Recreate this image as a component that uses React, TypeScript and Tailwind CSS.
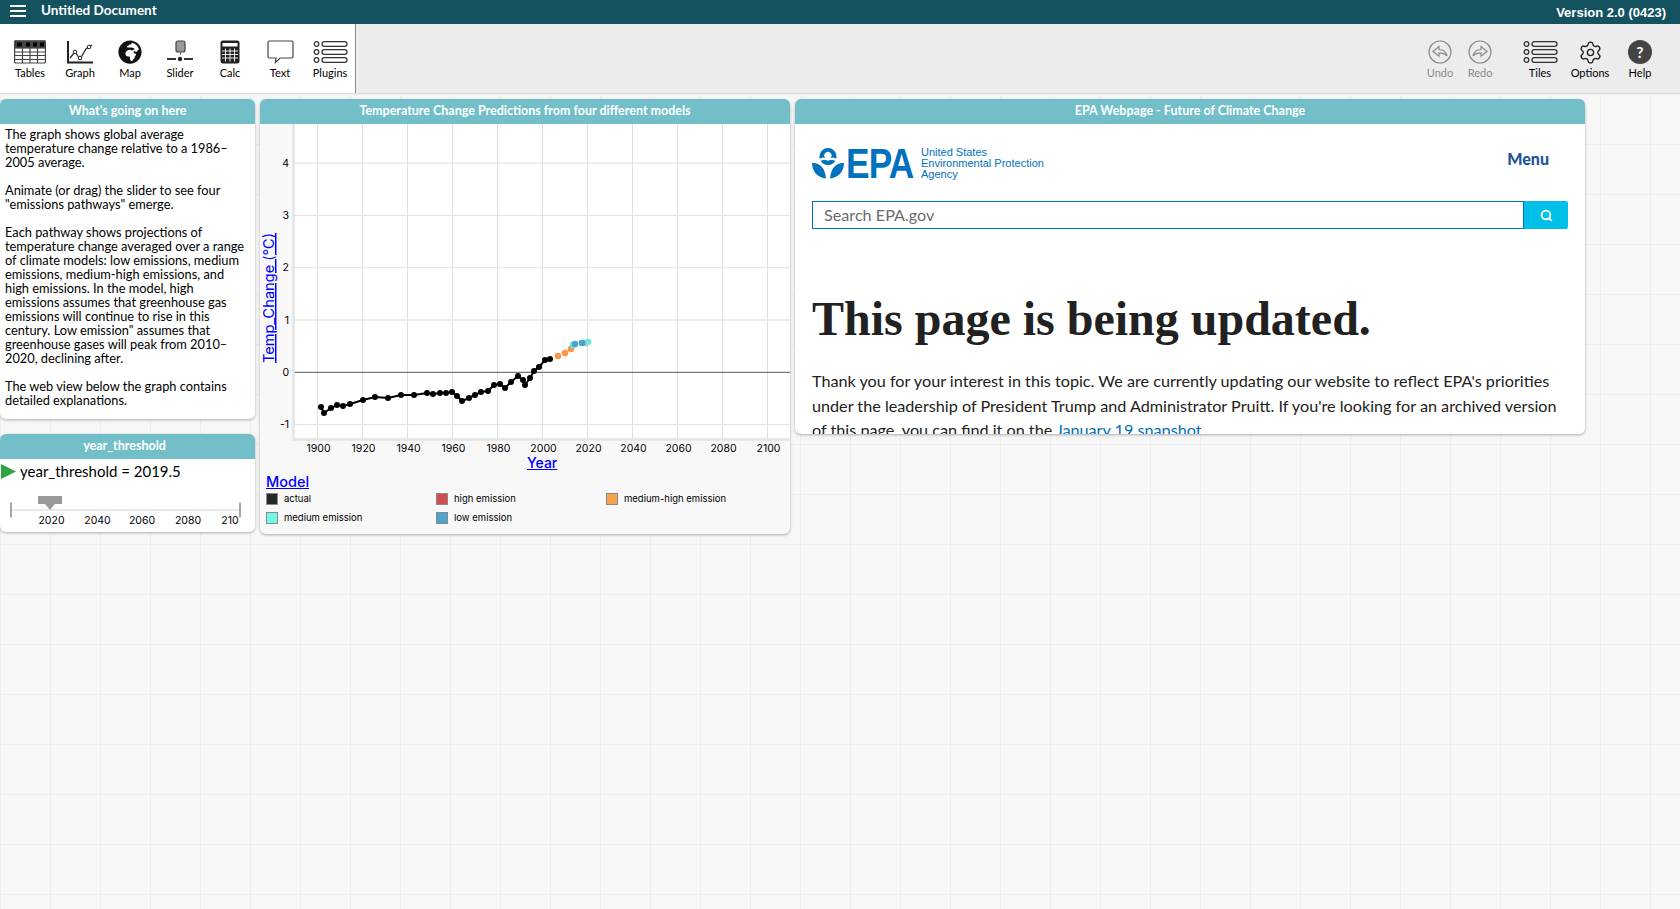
import { Search, Settings } from 'lucide-react';
import { FaGlobeAfrica } from 'react-icons/fa';
import type { ReactNode } from 'react';

const museo = "font-['Lato','Noto_Sans',sans-serif]";
const axisFont = 'Inter, Lato, sans-serif';

// chart data, read off the plot in page pixels
const actual: [number, number][] = [
  [321, 407], [324, 413], [331, 408], [337, 405], [343, 406], [350, 404], [363, 400], [375, 397],
  [388, 398], [401, 395], [414, 395], [427, 393], [433, 394], [440, 393], [446, 393], [452, 392],
  [457, 396], [462, 401], [469, 398], [475, 395], [481, 392], [488, 391], [494, 385], [500, 384],
  [505, 388], [511, 382], [518, 376], [523, 380], [525, 385], [530, 378], [534, 371], [539, 367],
  [545, 360], [550, 359],
];
const projected: [number, number, string][] = [
  [558, 356, '#f7964a'], [565, 353, '#f7964a'], [571, 349, '#f7964a'],
  [573, 345, '#6ee7dc'], [585, 343, '#d9a0a0'], [588, 342, '#6ee7dc'],
  [575, 344, '#4ba3cf'], [582, 343, '#4ba3cf'],
];

const xYears = [1900, 1920, 1940, 1960, 1980, 2000, 2020, 2040, 2060, 2080, 2100];
const yTicks = [4, 3, 2, 1, 0, -1];
const xOf = (year: number) => 57.5 + (year - 1900) * 2.25;
const yOf = (v: number) => 248.3 - v * 52.3;

const summary = [
  ['The graph shows global average', 'temperature change relative to a 1986–', '2005 average.'],
  ['Animate (or drag) the slider to see four', '"emissions pathways" emerge.'],
  [
    'Each pathway shows projections of',
    'temperature change averaged over a range',
    'of climate models: low emissions, medium',
    'emissions, medium-high emissions, and',
    'high emissions. In the model, high',
    'emissions assumes that greenhouse gas',
    'emissions will continue to rise in this',
    'century. Low emission" assumes that',
    'greenhouse gases will peak from 2010–',
    '2020, declining after.',
  ],
  ['The web view below the graph contains', 'detailed explanations.'],
];

const legend = [
  { label: 'actual', color: 'bg-[#23262b]' },
  { label: 'high emission', color: 'bg-[#cf4f52]' },
  { label: 'medium-high emission', color: 'bg-[#f9a34d]' },
  { label: 'medium emission', color: 'bg-[#6ffbe9]' },
  { label: 'low emission', color: 'bg-[#4fa3cf]' },
];

function ToolButton({ label, icon, muted, width = 'w-[50px]' }: { label: string; icon: ReactNode; muted?: boolean; width?: string }) {
  return (
    <div className={`flex ${width} flex-col items-center pt-[16px]`}>
      <div className="flex h-[24px] items-center justify-center">{icon}</div>
      <span className={`mt-[2px] whitespace-nowrap text-[11px] leading-[14px] ${muted ? 'text-[#8a8a8a]' : 'text-black'}`}>{label}</span>
    </div>
  );
}

function TablesIcon() {
  return (
    <svg width="32" height="24" viewBox="0 0 32 24" fill="none" stroke="#444" strokeWidth="1.2">
      <rect x="0.6" y="1" width="30.8" height="22" rx="1" />
      <rect x="1" y="1" width="30" height="7" fill="#444" />
      <path d="M3 2.5h5v4H3zM12 2.5h4v4h-4zM19 2.500h4v4h-4zM26 2.500h4v4h-4z" fill="#000" stroke="none" />
      <path d="M1 12h30M1 15.500h30M1 19.500h30M8.500 8v15M16 8v15M23.500 8v15" />
    </svg>
  );
}

function GraphIcon() {
  return (
    <svg width="26" height="24" viewBox="0 0 26 24" fill="none" stroke="#222">
      <path d="M1 1v21.500h25" strokeWidth="2" />
      <path d="M3 18l5-6 5 7 6-10 6-4" strokeWidth="1.2" />
      <circle cx="8" cy="12" r="1.800" fill="#fff" />
      <circle cx="13" cy="18" r="1.800" fill="#fff" />
      <circle cx="22" cy="7" r="1.800" fill="#fff" />
    </svg>
  );
}

function SliderIcon() {
  return (
    <svg width="26" height="24" viewBox="0 0 26 24">
      <rect x="9" y="1" width="9" height="11" rx="2" fill="#999" stroke="#444" strokeWidth="1.200" />
      <path d="M13.500 12v3" stroke="#777" strokeWidth="1.200" />
      <path d="M0 19h9M17 19h9" stroke="#333" strokeWidth="2.200" />
      <circle cx="13" cy="19" r="2.200" fill="#222" />
    </svg>
  );
}

function CalcIcon() {
  return (
    <svg width="20" height="24" viewBox="0 0 20 24">
      <rect x="0.500" y="0.500" width="19" height="23" rx="2.500" fill="#222" />
      <rect x="2.500" y="3" width="15" height="3.500" fill="#fff" />
      <path d="M2 11h16M2 14.500h16M2 18h16M5.500 8.500v13M10 8.500v13M14.500 8.500v13" stroke="#fff" strokeWidth="0.900" />
    </svg>
  );
}

function TextIcon() {
  return (
    <svg width="27" height="24" viewBox="0 0 27 24" fill="none" stroke="#444" strokeWidth="1.200">
      <path d="M2.500 1h22a1.500 1.500 0 0 1 1.500 1.500v14a1.500 1.500 0 0 1-1.500 1.500H13l-4.500 4.500.5-4.500H2.500A1.500 1.500 0 0 1 1 16.500v-14A1.500 1.500 0 0 1 2.500 1z" />
    </svg>
  );
}

function RowsIcon() {
  return (
    <svg width="35" height="24" viewBox="0 0 35 24" fill="none" stroke="#333" strokeWidth="1.300">
      <circle cx="3.500" cy="4" r="2.300" />
      <circle cx="3.500" cy="12" r="2.300" />
      <circle cx="3.500" cy="20" r="2.300" />
      <rect x="9" y="1.700" width="25" height="4.600" rx="2.300" />
      <rect x="9" y="9.700" width="25" height="4.600" rx="2.300" />
      <rect x="9" y="17.700" width="25" height="4.600" rx="2.300" />
    </svg>
  );
}

function HistoryIcon({ flip }: { flip?: boolean }) {
  return (
    <svg width="24" height="24" viewBox="0 0 24 24" fill="none" stroke="#8a8a8a" strokeWidth="1.200" className={flip ? '-scale-x-100' : ''}>
      <circle cx="12" cy="12" r="11" />
      <path d="M5 11.500l6-5v3c4 0 7 2 8 6.500-2-2.500-4.500-3.200-8-3.200v3.500z" />
    </svg>
  );
}

function EpaSeal() {
  return (
    <svg width="32" height="31" viewBox="0 0 32 31" fill="#0071bc">
      <path d="M7.500 8.500a8.500 8.500 0 0 1 17 0c0 .7-.1 1.300-.2 1.900-1.300.2-2.200-.9-3.600-.9-.9 0-1.600.4-2.300.7a3.600 3.600 0 1 0-5 0c-.7-.3-1.400-.7-2.300-.7-1.400 0-2.300 1.100-3.600.9-.1-.6-.2-1.200-.2-1.900z" />
      <path d="M8.500 12.500c1.300.5 2.500-.8 3.800-.8 1.400 0 2.300 1 3.700 1s2.300-1 3.700-1c1.300 0 2.500 1.300 3.800.8-1.200 2.600-4 4.500-7.500 4.500s-6.300-1.900-7.500-4.500z" />
      <path d="M0 15c6.500-.8 13 3.500 14 15.500C6 30 0 23.500 0 15z" />
      <path d="M32 15c-6.500-.8-13 3.500-14 15.500 8-.5 14-7 14-15.500z" />
    </svg>
  );
}

function Card({ title, className, headClass = '', children }: { title: string; className: string; headClass?: string; children: ReactNode }) {
  return (
    <section className={`flex flex-col overflow-hidden rounded-[6px] shadow-[0_1px_3px_rgba(0,0,0,0.3)] ${className}`}>
      <h2 className={`h-[25px] shrink-0 bg-[#72bfc9] text-center text-[12.5px] font-bold leading-[24px] text-white ${headClass}`}>{title}</h2>
      {children}
    </section>
  );
}

function TemperatureChart() {
  return (
    <svg width="530" height="340" viewBox="0 0 530 340" className="block shrink-0">
      <rect x="34" y="0" width="496" height="314" fill="#fff" />
      {xYears.map((year) => (
        <line key={year} x1={xOf(year)} x2={xOf(year)} y1="0" y2="314" stroke="#dfdfdf" />
      ))}
      {yTicks.map((v) => (
        <line key={v} x1="34" x2="530" y1={yOf(v)} y2={yOf(v)} stroke={v === 0 ? '#555' : '#e6e6e6'} strokeWidth={v === 0 ? 1 : 1.300} />
      ))}
      <path d="M33.500 0v315.500H530" fill="none" stroke="#e4e4e4" strokeWidth="2.500" />
      <polyline points={actual.map(([x, y]) => `${x - 260},${y - 124}`).join(' ')} fill="none" stroke="#000" strokeWidth="2" />
      {actual.map(([x, y]) => (
        <circle key={x} cx={x - 260} cy={y - 124} r="3" fill="#000" />
      ))}
      {projected.map(([x, y, c], i) => (
        <circle key={i} cx={x - 260} cy={y - 124} r="3.300" fill={c} />
      ))}
      <g fontFamily={axisFont} fontSize="10.500" fill="#000">
        {yTicks.map((v) => (
          <text key={v} x="29" y={yOf(v) + 3.500} textAnchor="end">{v}</text>
        ))}
        {xYears.map((year) => (
          <text key={year} x={xOf(year) + 1} y="328" textAnchor="middle">{year}</text>
        ))}
      </g>
      <text x="0" y="0" transform="translate(14,239) rotate(-90)" fontFamily={axisFont} fontSize="14.600" fill="#0000ff" textDecoration="underline">Temp_Change (°C)</text>
    </svg>
  );
}

export default function App() {
  return (
    <div className={`flex h-screen flex-col overflow-hidden bg-[#f7f7f7] ${museo}`}>
      <header className="flex h-[24px] shrink-0 items-center justify-between bg-[#14525f] text-white">
        <div className="flex items-center">
          <div className="ml-[10px] flex h-[12px] w-[16px] -translate-y-[1px] flex-col justify-between">
            <span className="h-[2px] bg-white" />
            <span className="h-[2px] bg-white" />
            <span className="h-[2px] bg-white" />
          </div>
          <span className="ml-[15px] -translate-y-[2px] text-[13.5px] font-bold leading-[20px]">Untitled Document</span>
        </div>
        <span className="mr-[14px] mt-[1px] font-['Liberation_Sans',sans-serif] text-[13px] font-bold">Version 2.0 (0423)</span>
      </header>

      <div className="flex h-[70px] shrink-0 border-b border-[#dcdcdc] bg-[#ececec]">
        <div className="flex w-[356px] border-r border-[#8c8c8c] bg-white pl-[5px]">
          <ToolButton label="Tables" icon={<TablesIcon />} />
          <ToolButton label="Graph" icon={<GraphIcon />} />
          <ToolButton label="Map" icon={<FaGlobeAfrica size={24} color="#111" />} />
          <ToolButton label="Slider" icon={<SliderIcon />} />
          <ToolButton label="Calc" icon={<CalcIcon />} />
          <ToolButton label="Text" icon={<TextIcon />} />
          <ToolButton label="Plugins" icon={<RowsIcon />} />
        </div>
        <div className="flex flex-1 justify-end pr-[15px]">
          <ToolButton label="Undo" icon={<HistoryIcon />} muted width="w-[40px]" />
          <ToolButton label="Redo" icon={<HistoryIcon flip />} muted width="w-[40px]" />
          <div className="w-[15px]" />
          <ToolButton label="Tiles" icon={<RowsIcon />} />
          <ToolButton label="Options" icon={<Settings size={25} strokeWidth={1.3} color="#222" />} />
          <ToolButton
            label="Help"
            icon={
              <span className="flex h-[24px] w-[24px] items-center justify-center rounded-full bg-[#444] text-[15px] font-bold text-white">?</span>
            }
          />
        </div>
      </div>

      <main className="flex flex-1 items-start gap-[5px] bg-[linear-gradient(to_right,#eeeeee_1px,transparent_1px),linear-gradient(to_bottom,#eeeeee_1px,transparent_1px)] bg-[size:50px_50px] pt-[5px]">
        <div className="flex w-[255px] flex-col gap-[15px]">
          <Card title="What's going on here" className="h-[320px] bg-white">
            <div className="flex flex-col gap-[14px] pl-[5px] pt-[3px] text-[12.8px] leading-[14px] text-black">
              {summary.map((para, i) => (
                <p key={i}>
                  {para.map((line) => (
                    <span key={line} className="block whitespace-nowrap">{line}</span>
                  ))}
                </p>
              ))}
            </div>
          </Card>
          <Card title="year_threshold" headClass="pr-[6px]" className="h-[98px] bg-white">
            <div className="flex items-center pl-[1px] pt-[3px]">
              <svg width="15" height="15" viewBox="0 0 15 15" className="shrink-0">
                <path d="M0 0l15 7.500L0 15z" fill="#2da343" />
              </svg>
              <span className="ml-[4px] text-[15px] leading-[18px] text-black">year_threshold = 2019.5</span>
            </div>
            <svg width="255" height="50" viewBox="0 0 255 50" className="mt-[2px] block">
              <path d="M11 28h229" stroke="#e2e2e2" strokeWidth="1.500" />
              <path d="M11 20.500v15M240 20.500v15" stroke="#888" strokeWidth="1.500" />
              <path d="M38 14h24v8h-7l-5 6-5-6h-7z" fill="#999" />
              <g fontFamily={axisFont} fontSize="10.500" fill="#000" textAnchor="middle">
                <text x="51.500" y="42">2020</text>
                <text x="97.500" y="42">2040</text>
                <text x="142" y="42">2060</text>
                <text x="188" y="42">2080</text>
                <text x="230" y="42">210</text>
              </g>
            </svg>
          </Card>
        </div>

        <Card title="Temperature Change Predictions from four different models" className="h-[435px] w-[530px] bg-[#f8f8f8]">
          <TemperatureChart />
          <div className="relative font-['Inter',sans-serif]">
            <a className="absolute left-[267px] top-[-9px] text-[14px] font-medium leading-[16px] text-[#0000ff] underline">Year</a>
            <a className="ml-[6px] mt-[10px] block text-[14.5px] font-medium leading-[16px] text-[#0000ff] underline">Model</a>
            <ul className="ml-[6px] mt-[3px] grid grid-cols-[170px_170px_170px] gap-y-[7px]">
              {legend.map((item) => (
                <li key={item.label} className="flex h-[12px] items-center gap-[6px]">
                  <span className={`h-[12px] w-[12px] border border-[#8a8a8a] ${item.color}`} />
                  <span className="text-[9.5px] leading-[12px] text-black">{item.label}</span>
                </li>
              ))}
            </ul>
          </div>
        </Card>

        <Card title="EPA Webpage - Future of Climate Change" className="h-[335px] w-[790px] bg-white">
          <div className="flex h-[310px] flex-col overflow-hidden px-[17px]">
            <div className="flex items-center justify-between pt-[23px]">
              <div className="flex h-[31px] items-center">
                <EpaSeal />
                <span className="ml-[2px] w-[67px] origin-left scale-x-[0.84] font-['Liberation_Sans',sans-serif] text-[42px] font-bold leading-[31px] tracking-[-1px] text-[#0071bc]">EPA</span>
                <span className="ml-[8px] font-['Liberation_Sans',sans-serif] text-[11px] leading-[11px] text-[#0071bc]">
                  United States<br />Environmental Protection<br />Agency
                </span>
              </div>
              <span className="mb-[8px] mr-[19px] text-[16px] font-black text-[#205493]">Menu</span>
            </div>
            <div className="mt-[22px] flex h-[28px] shrink-0">
              <div className="flex flex-1 items-center border border-[#0071bc] pl-[11px] text-[16.2px] text-[#6b6b6b]">Search EPA.gov</div>
              <div className="flex w-[44px] items-center justify-center rounded-r-[2px] bg-[#00bfe9]">
                <Search size={13} strokeWidth={3.5} color="#fff" />
              </div>
            </div>
            <h1 className="mt-[65px] whitespace-nowrap font-['Liberation_Serif',serif] text-[48px] font-bold leading-[50px] text-[#212121]">This page is being updated.</h1>
            <p className="mt-[25px] text-[16.2px] leading-[24.500px] text-[#212121]">
              <span className="block whitespace-nowrap">Thank you for your interest in this topic. We are currently updating our website to reflect EPA's priorities</span>
              <span className="block whitespace-nowrap">under the leadership of President Trump and Administrator Pruitt. If you're looking for an archived version</span>
              <span className="block whitespace-nowrap">of this page, you can find it on the <a className="text-[#0071bc]">January 19 snapshot</a>.</span>
            </p>
          </div>
        </Card>
      </main>
    </div>
  );
}
